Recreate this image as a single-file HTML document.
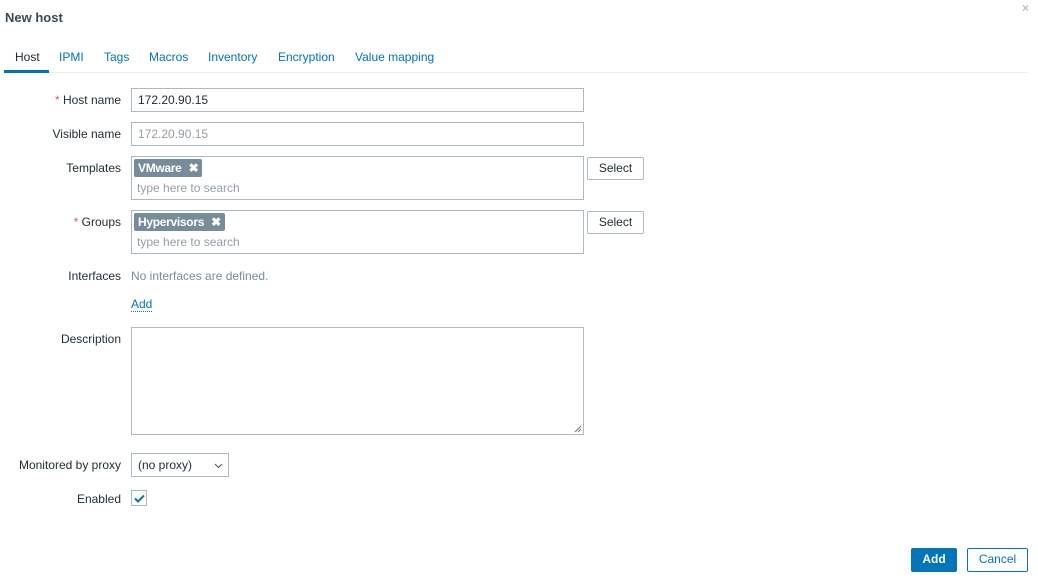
<!DOCTYPE html>
<html><head><style>
*{box-sizing:border-box;margin:0;padding:0}
body{width:1038px;height:581px;background:#fff;font-family:"Liberation Sans",Arial,sans-serif;font-size:12px;color:#1f2c33;position:relative;overflow:hidden}
.a{position:absolute}
.lbl{position:absolute;right:917px;text-align:right;white-space:nowrap}
.req:before{content:"* ";color:#e45959}
.inp{position:absolute;left:131px;width:453px;border:1px solid #acbbc2;background:#fff}
.tag{position:absolute;left:2px;top:2px;height:18px;background:#768d99;color:#fff;font-weight:bold;padding:2px 4px 0 4px;border-radius:2px;white-space:nowrap;letter-spacing:-0.3px}
.tag span{font-size:12px;margin-left:7px}
.ph{position:absolute;left:5px;color:#959ea5}
.btn{position:absolute;border:1px solid #acbbc2;background:#fff;text-align:center;line-height:21px;border-radius:2px}
.tab{position:absolute;top:50px;color:#0275b8}
</style></head><body>
<div class="a" style="left:5px;top:10px;font-size:13px;font-weight:bold;color:#3b4a52">New host</div>
<div class="a" style="left:1022px;top:1px;color:#b6c2c8;font-size:12px;font-weight:bold">×</div>
<div class="tab" style="left:15px;color:#1f2c33">Host</div>
<div class="tab" style="left:59px">IPMI</div>
<div class="tab" style="left:104px">Tags</div>
<div class="tab" style="left:149px">Macros</div>
<div class="tab" style="left:208px">Inventory</div>
<div class="tab" style="left:278px">Encryption</div>
<div class="tab" style="left:355px">Value mapping</div>
<div class="a" style="left:4px;top:72px;width:1024px;height:1px;background:#ebeef0"></div>
<div class="a" style="left:4px;top:70px;width:45px;height:3px;background:#0275b8"></div>

<div class="lbl req" style="top:93px">Host name</div>
<div class="inp" style="top:88px;height:24px;padding:4px 6px">172.20.90.15</div>
<div class="lbl" style="top:127px">Visible name</div>
<div class="inp" style="top:122px;height:24px;padding:4px 6px;color:#959ea5">172.20.90.15</div>

<div class="lbl" style="top:161px">Templates</div>
<div class="inp" style="top:156px;height:44px"><div class="tag">VMware<span>✖</span></div><div class="ph" style="top:24px">type here to search</div></div>
<div class="btn" style="left:587px;top:157px;width:57px;height:23px">Select</div>

<div class="lbl req" style="top:215px">Groups</div>
<div class="inp" style="top:210px;height:44px"><div class="tag">Hypervisors<span>✖</span></div><div class="ph" style="top:24px">type here to search</div></div>
<div class="btn" style="left:587px;top:211px;width:57px;height:23px">Select</div>

<div class="lbl" style="top:269px">Interfaces</div>
<div class="a" style="left:131px;top:269px;color:#768d99">No interfaces are defined.</div>
<div class="a" style="left:131px;top:298px;color:#0275b8;border-bottom:1px dotted #0275b8;line-height:13px">Add</div>

<div class="lbl" style="top:332px">Description</div>
<div class="inp" style="top:327px;height:108px"><svg class="a" style="right:1px;bottom:1px" width="8" height="8"><path d="M1 7L7 1M4 7L7 4" stroke="#777" stroke-width="1"/></svg></div>

<div class="lbl" style="top:458px">Monitored by proxy</div>
<div class="a" style="left:131px;top:453px;width:98px;height:24px;border:1px solid #acbbc2;padding:4px 6px">(no proxy)<svg class="a" style="left:82px;top:9px" width="9" height="6"><path d="M1 1L4.5 4.5L8 1" fill="none" stroke="#555" stroke-width="1"/></svg></div>

<div class="lbl" style="top:492px">Enabled</div>
<div class="a" style="left:131px;top:490px;width:16px;height:16px;border:1px solid #acbbc2"><svg class="a" style="left:2px;top:3px" width="11" height="9"><path d="M1 4.5L4 7.5L10 1.5" fill="none" stroke="#0275b8" stroke-width="2"/></svg></div>

<div class="btn" style="left:911px;top:548px;width:46px;height:24px;background:#0275b8;border-color:#0275b8;color:#fff;font-weight:bold">Add</div>
<div class="btn" style="left:967px;top:548px;width:61px;height:24px;border-color:#0275b8;color:#0275b8">Cancel</div>
</body></html>
